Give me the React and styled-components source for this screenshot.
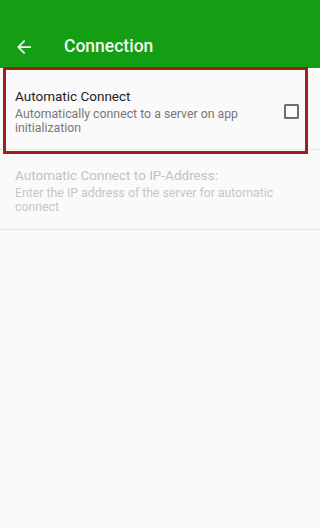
import styled, { createGlobalStyle } from "styled-components";

const GlobalStyle = createGlobalStyle`
  html, body {
    margin: 0;
    padding: 0;
    background: #fafafa;
  }
  body {
    font-family: Roboto, "Noto Sans", "Liberation Sans", sans-serif;
  }
`;

const Screen = styled.div`
  width: 320px;
  min-height: 528px;
  background: #fafafa;
  display: flex;
  flex-direction: column;
`;

const Toolbar = styled.header`
  height: 42px;
  padding-top: 26px;
  background: #139e13;
  display: flex;
  align-items: center;
`;

const BackButton = styled.button`
  border: none;
  background: none;
  padding: 0;
  margin-left: 17px;
  width: 14px;
  height: 14px;
  display: flex;
  cursor: pointer;
`;

const Title = styled.h1`
  margin: 0 0 0 33px;
  font-size: 17.5px;
  font-weight: 500;
  color: #f2f9f0;
  line-height: 1;
`;

const PrefList = styled.div`
  display: flex;
  flex-direction: column;
`;

const PrefRow = styled.div`
  position: relative;
  display: flex;
  align-items: center;
  padding: ${(p) => p.$pad};
  border-bottom: 1px solid #e6e6e6;
`;

const TextBlock = styled.div`
  flex: 1;
  min-width: 0;
`;

const PrefTitle = styled.div`
  font-size: 13.5px;
  line-height: 18px;
  color: ${(p) => (p.$disabled ? "#c2c2c2" : "#222222")};
`;

const PrefSummary = styled.div`
  margin-top: 2px;
  font-size: 12.3px;
  line-height: 14px;
  color: ${(p) => (p.$disabled ? "#c6c6c6" : "#777777")};
`;

const CheckBox = styled.span`
  flex: none;
  box-sizing: border-box;
  width: 15px;
  height: 15px;
  margin: 0 21px 0 24px;
  border: 2px solid #6e6e6e;
  border-radius: 1.5px;
`;

const Highlight = styled.div`
  position: absolute;
  left: 3px;
  top: -1px;
  width: 305px;
  height: 87px;
  box-sizing: border-box;
  border: 3px solid #a11f1a;
  pointer-events: none;
`;

function ArrowBack() {
  return (
    <svg width="14" height="14" viewBox="4 4 16 16" fill="#f2f9f0">
      <path d="M20 11H7.83l5.59-5.59L12 4l-8 8 8 8 1.41-1.41L7.83 13H20v-2z" />
    </svg>
  );
}

export default function App() {
  return (
    <>
      <GlobalStyle />
      <Screen>
        <Toolbar>
          <BackButton aria-label="Back">
            <ArrowBack />
          </BackButton>
          <Title>Connection</Title>
        </Toolbar>
        <PrefList>
          <PrefRow $pad="19px 0 14px 15px">
            <TextBlock>
              <PrefTitle>Automatic Connect</PrefTitle>
              <PrefSummary>
                Automatically connect to a server on app initialization
              </PrefSummary>
            </TextBlock>
            <CheckBox />
            <Highlight />
          </PrefRow>
          <PrefRow $pad="16px 15px 15px 15px">
            <TextBlock>
              <PrefTitle $disabled>Automatic Connect to IP-Address:</PrefTitle>
              <PrefSummary $disabled>
                Enter the IP address of the server for automatic connect
              </PrefSummary>
            </TextBlock>
          </PrefRow>
        </PrefList>
      </Screen>
    </>
  );
}
